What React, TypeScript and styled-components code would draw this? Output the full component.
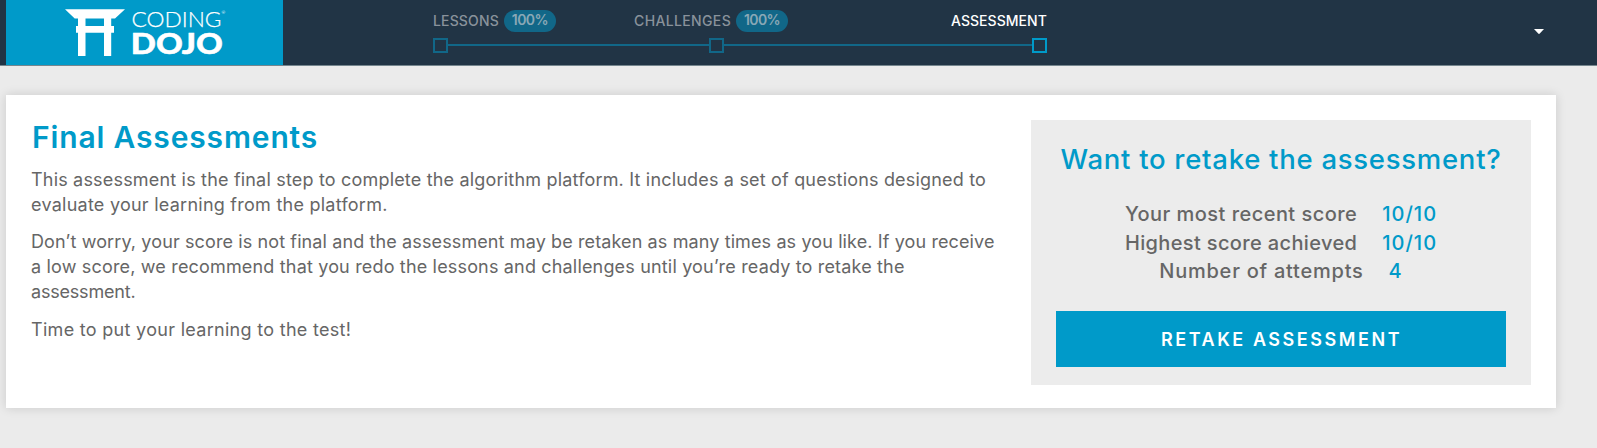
import React from 'react';
import styled, { createGlobalStyle } from 'styled-components';

const GlobalStyle = createGlobalStyle`
  * { box-sizing: border-box; }
  body {
    margin: 0;
    min-height: 100vh;
    background: #ebebeb;
    color: #666;
    font-family: Inter, "Liberation Sans", sans-serif;
  }
  h1, h2, p, ul { margin: 0; padding: 0; font-weight: inherit; }
`;

const Page = styled.div`
  min-height: 100vh;
`;

const Header = styled.header`
  display: flex;
  height: 66px;
  padding-left: 6px;
  background: #213445;
  border-bottom: 1px solid #75868e;
`;

const Brand = styled.a`
  width: 277px;
  height: 65px;
  background: #009ac9;
  svg { display: block; }
`;

const Progress = styled.nav`
  display: flex;
  flex-direction: column;
  width: 614px;
  margin-left: 150px;
  padding-top: 10px;
`;

const Labels = styled.div`
  display: flex;
  height: 22px;
`;

const Step = styled.div<{ $width: number; $gap: number }>`
  display: flex;
  width: ${(p) => p.$width}px;
  gap: ${(p) => p.$gap}px;
`;

const StepName = styled.span<{ $active?: boolean; $tracking: number }>`
  margin-top: 3px;
  font-size: 14px;
  font-weight: 500;
  line-height: 16px;
  letter-spacing: ${(p) => p.$tracking}px;
  color: ${(p) => (p.$active ? '#fff' : '#89929b')};
  white-space: nowrap;
`;

const Badge = styled.span`
  width: 52px;
  height: 22px;
  padding: 2px 0;
  border-radius: 11px;
  background: #116788;
  color: #89a8b6;
  font-size: 14px;
  font-weight: 600;
  line-height: 16px;
  letter-spacing: -0.6px;
  text-align: center;
`;

const Track = styled.div`
  display: flex;
  align-items: center;
  height: 15px;
  margin-top: 6px;
`;

const Node = styled.span<{ $active?: boolean }>`
  width: 15px;
  height: 15px;
  border: 2px solid ${(p) => (p.$active ? '#009ac9' : '#116788')};
`;

const Rail = styled.span<{ $width: number }>`
  width: ${(p) => p.$width}px;
  height: 2px;
  margin-bottom: 1px;
  background: #116788;
`;

const MenuButton = styled.button`
  margin: 0 53px 0 auto;
  padding: 0;
  border: 0;
  background: none;
  svg { display: block; margin-bottom: 2px; }
`;

const Card = styled.main`
  display: flex;
  justify-content: space-between;
  width: 1550px;
  height: 313px;
  margin: 29px 0 0 6px;
  padding: 25px 25px 23px;
  background: #fff;
  box-shadow: 0 0 10px rgba(0, 0, 0, 0.14);
`;

const Intro = styled.section`
  margin-top: -1px;
`;

const Title = styled.h1`
  margin-bottom: 12px;
  padding-left: 1px;
  color: #009ac9;
  font-size: 30px;
  font-weight: 600;
  line-height: 36px;
  letter-spacing: 0.85px;
`;

const Paragraph = styled.p`
  margin-bottom: 12px;
  font-size: 18px;
  line-height: 25px;

  &:last-child { padding-top: 1px; }
`;

const Line = styled.span<{ $tracking: number }>`
  display: block;
  letter-spacing: ${(p) => p.$tracking}px;
  white-space: nowrap;
`;

const Panel = styled.aside`
  width: 500px;
  height: 265px;
  padding: 23px 25px 18px;
  background: #ececec;
`;

const PanelTitle = styled.h2`
  margin-bottom: 25px;
  color: #009ac9;
  font-size: 27.5px;
  font-weight: 500;
  line-height: 32px;
  letter-spacing: 0.73px;
  text-align: center;
  white-space: nowrap;
`;

const Scores = styled.ul`
  list-style: none;
  height: 111px;
  font-size: 20px;
  font-weight: 500;
  line-height: 28.6px;
`;

const Score = styled.li`
  display: flex;
  justify-content: center;
  gap: 25px;
`;

const ScoreLabel = styled.span<{ $tracking: number }>`
  letter-spacing: ${(p) => p.$tracking}px;
`;

const ScoreValue = styled.span`
  color: #009ac9;
  letter-spacing: 1px;
`;

const Retake = styled.button`
  display: block;
  width: 450px;
  height: 56px;
  padding: 2px 0 0 1px;
  border: 0;
  background: #009ac9;
  color: #fff;
  font: 600 18px/54px Inter, "Liberation Sans", sans-serif;
  letter-spacing: 2.55px;
`;

const Logo = () => (
  <svg width="277" height="65" viewBox="6 0 277 65" fill="#fff" role="img" aria-label="Coding Dojo">
    <path d="M65 9.3H125L115 18.4H111.2V26H114V32.7H111.2V56H104V32.7H85.5V56H78V32.7H76V26H78V18.4H74.7ZM85.5 18.6V26H104V18.6Z" fillRule="evenodd" />
    <text x="131.5" y="26.8" fontFamily="Lato, sans-serif" fontWeight="300" fontSize="21.8" stroke="#fff" strokeWidth="0.25" textLength="90" lengthAdjust="spacingAndGlyphs">CODING</text>
    <text x="221.6" y="14" fontFamily="Lato, sans-serif" fontSize="4.5">®</text>
    <text x="130.8" y="54" fontFamily="Lato, sans-serif" fontWeight="900" fontSize="28.8" stroke="#fff" strokeWidth="0.5" textLength="92" lengthAdjust="spacingAndGlyphs">DOJO</text>
  </svg>
);

const scores = [
  { label: 'Your most recent score', value: '10/10', tracking: 0.46 },
  { label: 'Highest score achieved', value: '10/10', tracking: 0.36 },
  { label: 'Number of attempts', value: '4', tracking: 0.76 },
];

const paragraphs = [
  [
    { text: 'This assessment is the final step to complete the algorithm platform. It includes a set of questions designed to', tracking: 0.185 },
    { text: 'evaluate your learning from the platform.', tracking: 0.25 },
  ],
  [
    { text: 'Don’t worry, your score is not final and the assessment may be retaken as many times as you like. If you receive', tracking: 0.115 },
    { text: 'a low score, we recommend that you redo the lessons and challenges until you’re ready to retake the', tracking: 0.17 },
    { text: 'assessment.', tracking: -0.2 },
  ],
  [{ text: 'Time to put your learning to the test!', tracking: 0.3 }],
];

export default function App() {
  return (
    <Page>
      <GlobalStyle />
      <Header>
        <Brand><Logo /></Brand>
        <Progress>
          <Labels>
            <Step $width={201} $gap={5}>
              <StepName $tracking={0.15}>LESSONS</StepName>
              <Badge>100%</Badge>
            </Step>
            <Step $width={317} $gap={5}>
              <StepName $tracking={0.36}>CHALLENGES</StepName>
              <Badge>100%</Badge>
            </Step>
            <Step $width={96} $gap={0}>
              <StepName $active $tracking={0.05}>ASSESSMENT</StepName>
            </Step>
          </Labels>
          <Track>
            <Node />
            <Rail $width={261} />
            <Node />
            <Rail $width={308} />
            <Node $active />
          </Track>
        </Progress>
        <MenuButton aria-label="Open menu">
          <svg width="10" height="5" viewBox="0 0 10 5" fill="#fff"><path d="M0 0H10L5.8 4.6Q5 5.3 4.2 4.6Z" /></svg>
        </MenuButton>
      </Header>
      <Card>
        <Intro>
          <Title>Final Assessments</Title>
          {paragraphs.map((lines, i) => (
            <Paragraph key={i}>
              {lines.map((line) => (
                <Line key={line.text} $tracking={line.tracking}>{line.text}</Line>
              ))}
            </Paragraph>
          ))}
        </Intro>
        <Panel>
          <PanelTitle>Want to retake the assessment?</PanelTitle>
          <Scores>
            {scores.map((s) => (
              <Score key={s.label}>
                <ScoreLabel $tracking={s.tracking}>{s.label}</ScoreLabel>
                <ScoreValue>{s.value}</ScoreValue>
              </Score>
            ))}
          </Scores>
          <Retake>RETAKE ASSESSMENT</Retake>
        </Panel>
      </Card>
    </Page>
  );
}
